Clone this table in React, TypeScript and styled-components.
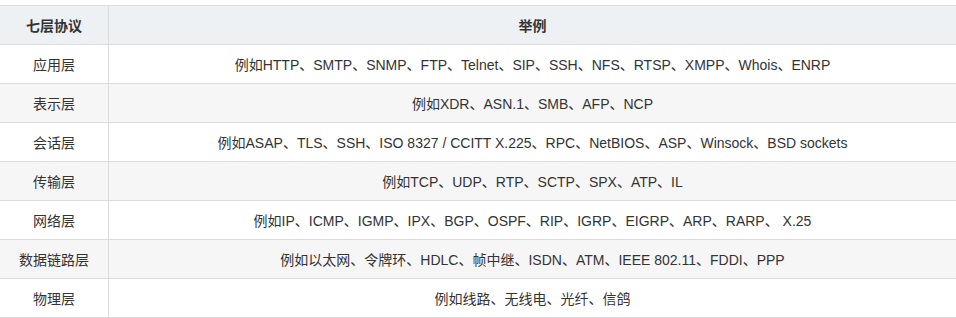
import React from "react";
import styled, { createGlobalStyle } from "styled-components";

const GlobalStyle = createGlobalStyle`
  html, body {
    margin: 0;
    padding: 0;
    background: #ffffff;
  }
  body {
    font-family: "Liberation Sans", Arial, "Noto Sans CJK SC", sans-serif;
  }
`;

const rows: { layer: string; example: string }[] = [
  { layer: "应用层", example: "例如HTTP、SMTP、SNMP、FTP、Telnet、SIP、SSH、NFS、RTSP、XMPP、Whois、ENRP" },
  { layer: "表示层", example: "例如XDR、ASN.1、SMB、AFP、NCP" },
  { layer: "会话层", example: "例如ASAP、TLS、SSH、ISO 8327 / CCITT X.225、RPC、NetBIOS、ASP、Winsock、BSD sockets" },
  { layer: "传输层", example: "例如TCP、UDP、RTP、SCTP、SPX、ATP、IL" },
  { layer: "网络层", example: "例如IP、ICMP、IGMP、IPX、BGP、OSPF、RIP、IGRP、EIGRP、ARP、RARP、 X.25" },
  { layer: "数据链路层", example: "例如以太网、令牌环、HDLC、帧中继、ISDN、ATM、IEEE 802.11、FDDI、PPP" },
  { layer: "物理层", example: "例如线路、无线电、光纤、信鸽" },
];

export default function App() {
  return (
    <>
      <GlobalStyle />
      <Page>
        <Table>
          <HeaderRow>
            <HeadCell>七层协议</HeadCell>
            <HeadCell>举例</HeadCell>
          </HeaderRow>
          {rows.map((r, i) => (
            <Row key={r.layer} $striped={i % 2 === 1}>
              <Cell>{r.layer}</Cell>
              <Cell>{r.example}</Cell>
            </Row>
          ))}
        </Table>
      </Page>
    </>
  );
}

//layout
const Page = styled.div`
  width: 956px;
  padding-top: 5px;
`;

const Table = styled.div`
  display: flex;
  flex-direction: column;
  width: 956px;
  border-top: 1px solid #dcdcdc;
  font-size: 14px;
  color: #333333;
`;

const RowBase = styled.div`
  display: grid;
  grid-template-columns: 108px 1fr;
  height: 39px;
  box-sizing: border-box;
  border-bottom: 1px solid #dcdcdc;
`;

const HeaderRow = styled(RowBase)`
  background: #eef1f4;
  font-weight: bold;
`;

const Row = styled(RowBase)<{ $striped: boolean }>`
  background: ${(p) => (p.$striped ? "#f6f6f6" : "#ffffff")};
`;

//cells
const Cell = styled.div`
  display: flex;
  align-items: center;
  justify-content: center;
  white-space: nowrap;
  & + & {
    border-left: 1px solid #dcdcdc;
  }
`;

const HeadCell = styled(Cell)`
  font-weight: bold;
`;
